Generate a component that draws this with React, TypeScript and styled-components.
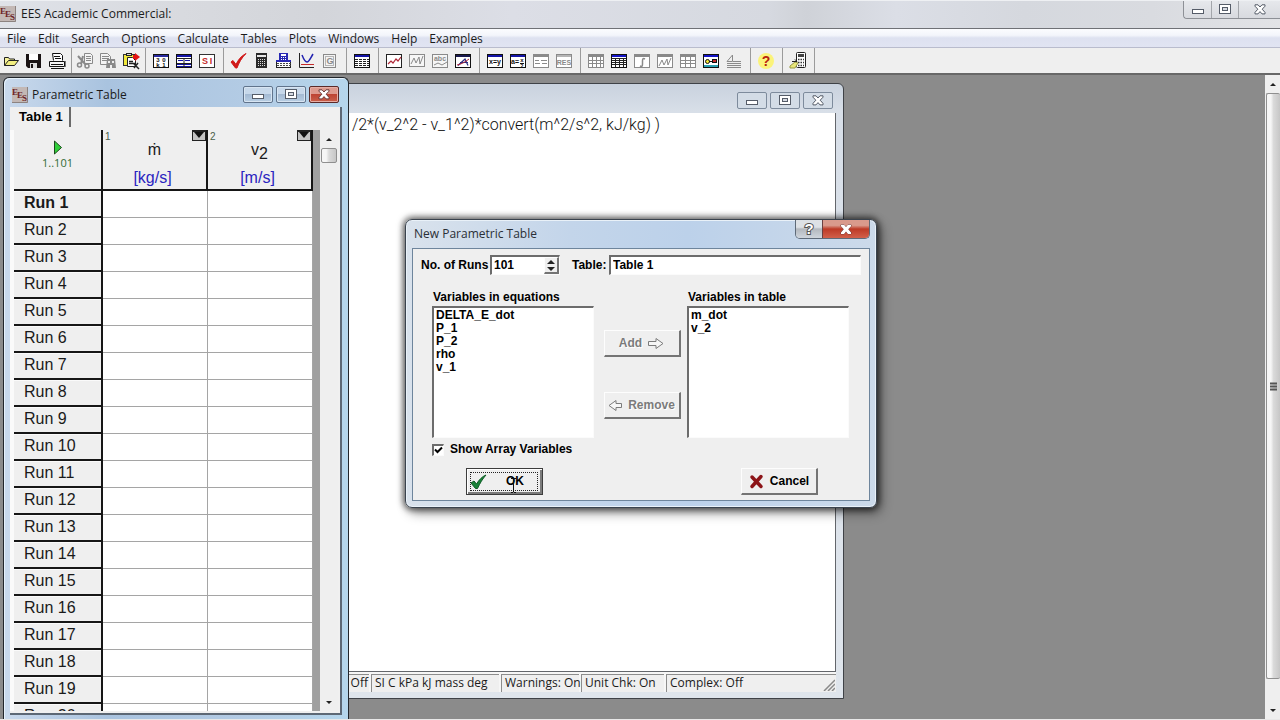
import React from "react";
import styled, { createGlobalStyle, css } from "styled-components";

const GlobalStyle = createGlobalStyle`
  *, *::before, *::after { box-sizing: border-box; }
  html, body, #root { height: 100%; }
  body { margin: 0; overflow: hidden; background: #8b8b8b; }
  button, input, select { font: inherit; color: inherit; margin: 0; }
`;

const uiFont = `"Open Sans", "Noto Sans", sans-serif`;
const sansFont = `"Liberation Sans", Arial, sans-serif`;

/* ---------- application frame ---------- */

const Screen = styled.div`
  display: flex;
  flex-direction: column;
  height: 100vh;
  font: 12px/16px ${uiFont};
  color: #1b1b1b;
`;

const TitleBar = styled.header`
  display: flex;
  justify-content: space-between;
  height: 28px;
  flex: none;
  background: linear-gradient(90deg, #dfe2e8 0%, #d9dbe0 12%, #d3d5da 25%, #dcdee6 40%, #d6d9e0 60%, #cfd2d8 63%, #dbdee6 70%, #d5d8de 80%, #d9dbe0 90%, #e2e3e6 100%);
  border-top: 1px solid #eef0f3;
`;

const AppTitle = styled.h1`
  display: flex;
  align-items: center;
  gap: 5px;
  margin: 0;
  padding-bottom: 2px;
  font: 12px/16px ${uiFont};
`;

const FrameControls = styled.div`
  display: grid;
  grid-template-columns: 27px 27px 42px;
  height: 18px;
  border: 1px solid #8d9096;
  border-width: 0 0 1px 1px;
  border-bottom-left-radius: 4px;
`;

const FrameButton = styled.button`
  display: flex;
  align-items: center;
  justify-content: center;
  padding: 0;
  border: 0;
  background: linear-gradient(#e6e8ec, #d8dadf);
  & + & { border-left: 1px solid #a3a6ab; }
  &:first-child { border-bottom-left-radius: 4px; }
`;

const MenuBar = styled.nav`
  display: flex;
  flex: none;
  height: 20px;
  padding-left: 1px;
  border-top: 1px solid #6f7176;
  border-bottom: 1px solid #b9bccd;
  background: linear-gradient(#fbfcfe 0%, #f3f5fb 35%, #dde1f0 50%, #e1e4f2 100%);
`;

const MenuItem = styled.button`
  padding: 2px 6px 0;
  border: 0;
  background: none;
  font: 12px/16px ${uiFont};
`;

const ToolBar = styled.div`
  display: flex;
  flex: none;
  height: 27px;
  background: #efefef;
  border-bottom: 2px solid #686868;
`;

const ToolGroup = styled.div<{ $left: number; $right: number }>`
  display: flex;
  align-items: center;
  padding: 0 ${(p) => p.$right}px 0 ${(p) => p.$left}px;
  border-right: 1px solid #9b9b9b;
`;

const ToolButton = styled.button`
  width: 23px;
  height: 24px;
  padding: 0 0 0 1px;
  border: 0;
  background: none;
  svg { display: block; }
`;

const Workspace = styled.div`
  display: flex;
  flex: 1;
  min-height: 0;
  border-bottom: 1px solid #e8e8e8;
`;

const Desktop = styled.main`
  position: relative;
  flex: 1;
  min-width: 0;
  overflow: hidden;
  background: #8b8b8b;
`;

/* ---------- scroll bars ---------- */

const ScrollTrack = styled.div<{ $width: number }>`
  display: flex;
  flex-direction: column;
  flex: none;
  width: ${(p) => p.$width}px;
  background: #efefef;
`;

const ScrollArrow = styled.button`
  display: flex;
  align-items: center;
  justify-content: center;
  flex: none;
  height: 18px;
  padding: 0;
  border: 0;
  background: none;
`;

const ScrollThumb = styled.div<{ $fill?: boolean }>`
  display: flex;
  align-items: center;
  justify-content: center;
  flex: none;
  margin: 0 1px;
  height: 15px;
  border: 1px solid #8f8f8f;
  border-radius: 2px;
  background: linear-gradient(90deg, #f6f6f6 30%, #dadada 50%, #c6c6c6);
  ${(p) => p.$fill && css`
    flex: 1;
    margin: 0 0 22px 1px;
    border-right: 0;
  `}
`;

const ScrollSpace = styled.div`
  flex: 1;
`;

/* ---------- child windows ---------- */

const EquationsWindow = styled.section`
  position: absolute;
  left: 100px;
  top: 8px;
  width: 744px;
  height: 616px;
  display: flex;
  flex-direction: column;
  padding: 0 7px 6px;
  border: 1px solid #3f4247;
  border-radius: 6px 6px 0 0;
  background: linear-gradient(#c9d2de 0, #d8dfe8 28px, #dfe5ec 100%);
`;

const ParametricWindow = styled.section`
  position: absolute;
  left: 3px;
  top: 2px;
  bottom: 0;
  width: 346px;
  display: flex;
  flex-direction: column;
  padding: 0 6px 4px;
  border: 1px solid #22262b;
  border-bottom: 0;
  border-radius: 6px 6px 0 0;
  background: linear-gradient(90deg, #c9d9ec, #a9c3df 30%, #b3cbe4 70%, #b5d6ec);
  box-shadow: inset 1px 1px 0 #e6f1fa;
`;

const WindowTitleBar = styled.header`
  display: flex;
  align-items: center;
  gap: 3px;
  flex: none;
  height: 29px;
  padding: 4px 3px 0 2px;
`;

const WindowTitle = styled.h2`
  flex: 1;
  display: flex;
  align-items: center;
  gap: 4px;
  margin: 0;
  font: 12px/16px ${uiFont};
`;

const CaptionButton = styled.button<{ $tone?: "active" | "close" }>`
  display: flex;
  align-items: center;
  justify-content: center;
  width: 30px;
  height: 17px;
  padding: 0;
  border: 1px solid #7d8b9c;
  border-radius: 2px;
  background: #d3dce6;
  ${(p) => p.$tone === "active" && css`
    border-color: #61748c;
    background: linear-gradient(#c7d8ea 45%, #a4bad3 50%, #b9cfe4);
    box-shadow: inset 0 0 0 1px #d8e5f2;
  `}
  ${(p) => p.$tone === "close" && css`
    border-color: #5b2a28;
    background: linear-gradient(#dd9a8e 45%, #bd4433 50%, #c9604b);
    box-shadow: inset 0 0 0 1px #e6aea5;
  `}
`;

const Editor = styled.div`
  flex: 1;
  border-right: 1px solid #63666b;
  border-bottom: 1px solid #63666b;
  background: #fff;
  overflow: hidden;
`;

const EquationLine = styled.pre`
  margin: 0;
  padding: 2px 175px 0 0;
  text-align: right;
  font: 300 16px/20px Roboto, ${sansFont};
  color: #111;
`;

const StatusBar = styled.footer`
  display: grid;
  grid-template-columns: 261px 128px 78px 83px 1fr;
  gap: 2px;
  height: 20px;
  padding-top: 2px;
  background: #f6f6f6;
`;

const StatusCell = styled.div<{ $end?: boolean }>`
  display: flex;
  justify-content: ${(p) => (p.$end ? "flex-end" : "flex-start")};
  padding: 0 1px 0 3px;
  border-top: 1px solid #8c8c8c;
  border-left: 1px solid #8c8c8c;
  background: #efefef;
  font: 12px/16px ${uiFont};
  white-space: nowrap;
`;

const Grip = styled.svg`
  margin: 4px 0 0 auto;
`;

/* ---------- parametric table ---------- */

const TableClient = styled.div`
  flex: 1;
  min-height: 0;
  display: flex;
  flex-direction: column;
  border-right: 2px solid #5d6875;
  border-bottom: 2px solid #5d6875;
  background: #f0f0f0;
`;

const TabStrip = styled.div`
  flex: none;
  height: 23px;
`;

const Tab = styled.button`
  height: 20px;
  padding: 0 6px 0 9px;
  border: 0;
  border-right: 2px solid #6a6a6a;
  background: none;
  font: bold 13px/20px ${sansFont};
  color: #000;
`;

const GridRow = styled.div`
  flex: 1;
  min-height: 0;
  display: flex;
  margin: 0 2px 2px 0;
  border-left: 4px solid #fafafa;
`;

const GridClip = styled.div`
  flex: none;
  overflow: hidden;
  background: #fff;
`;

const RunTable = styled.table`
  border-collapse: separate;
  border-spacing: 0;
  table-layout: fixed;
  width: 299px;
  font: 16px/20px ${sansFont};
  color: #1a1a1a;
`;

const headerFace = css`
  padding: 0;
  border-right: 2px solid #161616;
  border-bottom: 2px solid #161616;
  background: #efefef;
  font-weight: normal;
`;

const HeadCell = styled.th<{ $width: number }>`
  ${headerFace}
  width: ${(p) => p.$width}px;
  height: 61px;
  vertical-align: top;
`;

const RunAllButton = styled.button`
  display: flex;
  flex-direction: column;
  align-items: center;
  gap: 2px;
  width: 100%;
  padding: 10px 0 0;
  border: 0;
  background: none;
  font: 11px/12px ${uiFont};
  color: #2f6b35;
`;

const ColumnTop = styled.div`
  display: flex;
  justify-content: space-between;
  height: 11px;
  padding-left: 2px;
  font: 10px/14px ${sansFont};
  color: #4b5f4b;
`;

const ColumnMenu = styled.button`
  width: 14px;
  height: 11px;
  padding: 0;
  border: 1px solid #222;
  border-top-width: 2px;
  background: #c4c4c4;
  svg { display: block; }
`;

const ColumnName = styled.div`
  height: 27px;
  text-align: center;
  line-height: 18px;
  sub { font-size: 16px; line-height: 0; vertical-align: -4px; }
`;

const ColumnUnit = styled.div`
  text-align: center;
  padding-right: 4px;
  color: #2a24c0;
`;

const RunCell = styled.th<{ $current: boolean }>`
  ${headerFace}
  height: 27px;
  padding: 0 0 2px 10px;
  text-align: left;
  font-weight: ${(p) => (p.$current ? "bold" : "normal")};
  box-shadow: inset 0 1px 0 #fafafa;
`;

const ValueCell = styled.td`
  height: 27px;
  padding: 0;
  border-right: 1px solid #a5a5a5;
  border-bottom: 1px solid #a5a5a5;
  background: #fff;
`;

const GridGap = styled.div`
  flex: 1;
  background: #a0a0a0;
`;

/* ---------- dialog ---------- */

const Dialog = styled.section`
  position: absolute;
  left: 405px;
  top: 144px;
  width: 472px;
  height: 289px;
  display: flex;
  flex-direction: column;
  padding: 0 6px 6px;
  border: 1px solid #3a434e;
  border-radius: 7px;
  background: linear-gradient(90deg, #d9e2ec, #c3d5ea 35%, #bcd1ea 60%, #ccdaea);
  box-shadow: inset 0 0 0 1px #e9f1f8, 0 0 6px 2px rgba(0, 0, 0, 0.6), 4px 5px 12px rgba(0, 0, 0, 0.4);
  color: #000;
  font: bold 12px/13px ${sansFont};
`;

const DialogBar = styled.header`
  display: flex;
  justify-content: space-between;
  flex: none;
  height: 28px;
`;

const DialogTitle = styled.h2`
  margin: 0;
  padding: 6px 0 0 2px;
  font: 12px/16px ${uiFont};
  color: #2a2f36;
`;

const DialogControls = styled.div`
  display: grid;
  grid-template-columns: 26px 47px;
  height: 19px;
  border: 1px solid #5e6a78;
  border-top: 0;
  border-radius: 0 0 5px 5px;
  overflow: hidden;
`;

const DialogControl = styled.button<{ $close?: boolean }>`
  display: flex;
  align-items: center;
  justify-content: center;
  padding: 0;
  border: 0;
  background: linear-gradient(#dde1e5 40%, #b3b8be 50%, #cfd5dc);
  font: bold 15px/18px ${sansFont};
  color: #fff;
  -webkit-text-stroke: 2px #555;
  paint-order: stroke fill;
  ${(p) => p.$close && css`
    border-left: 1px solid #6b4040;
    background: linear-gradient(#d99a8c 30%, #bd3a26 50%, #d2604a);
  `}
`;

const DialogBody = styled.form`
  flex: 1;
  display: flex;
  flex-direction: column;
  padding: 6px 8px 5px;
  border: 1px solid #6e859c;
  background: #efefef;
`;

const TopRow = styled.div`
  display: flex;
  align-items: center;
`;

const sunken = css`
  border: 1px solid #fbfbfb;
  border-top: 2px solid #6c6c6c;
  border-left: 2px solid #6c6c6c;
  background: #fff;
`;

const raised = css`
  border: 1px solid #fdfdfd;
  border-right: 2px solid #747474;
  border-bottom: 2px solid #747474;
  background: #efefef;
`;

const RunsLabel = styled.label`
  width: 69px;
  white-space: nowrap;
`;

const SpinBox = styled.div`
  ${sunken}
  display: flex;
  width: 70px;
  height: 20px;
  margin-right: 12px;
`;

const SpinInput = styled.input`
  flex: 1;
  min-width: 0;
  padding: 0 0 1px 2px;
  border: 0;
  outline: 0;
  background: none;
`;

const SpinArrows = styled.div`
  ${raised}
  display: grid;
  grid-template-rows: 1fr 1fr;
  width: 15px;
`;

const SpinButton = styled.button`
  display: flex;
  align-items: center;
  justify-content: center;
  padding: 0;
  border: 0;
  background: none;
`;

const TableLabel = styled.label`
  width: 37px;
`;

const NameInput = styled.input`
  ${sunken}
  flex: 1;
  min-width: 0;
  height: 20px;
  padding: 0 2px 1px;
  outline: 0;
`;

const Columns = styled.div`
  display: flex;
  justify-content: space-between;
  padding: 16px 12px 0 11px;
`;

const ListField = styled.div`
  display: flex;
  flex-direction: column;
  gap: 2px;
  flex: none;
  width: 162px;
  label { padding-left: 1px; }
`;

const ListBox = styled.select`
  ${sunken}
  height: 132px;
  padding: 0;
  outline: 0;
  border-radius: 0;
  overflow: hidden;
  option {
    height: 13px;
    min-height: 13px;
    padding: 0 2px;
    font: bold 12px/13px ${sansFont};
    color: #000;
  }
`;

const TransferColumn = styled.div`
  display: flex;
  flex-direction: column;
  align-items: flex-start;
  gap: 35px;
  padding: 39px 0 0 3px;
`;

const PushButton = styled.button<{ $default?: boolean }>`
  ${raised}
  display: flex;
  align-items: center;
  justify-content: center;
  gap: 6px;
  flex: none;
  width: 77px;
  height: 27px;
  padding: 0;
  &:disabled { color: #7b7b7b; text-shadow: 1px 1px 0 #fff; }
  ${(p) => p.$default && css`
    position: relative;
    justify-content: flex-start;
    gap: 19px;
    padding-left: 3px;
    border: 1px solid #3d3d3d;
    box-shadow: inset 1px 1px 0 #fff, inset -2px -2px 0 #7b7b7b;
    &::after {
      content: "";
      position: absolute;
      inset: 3px 4px 3px 3px;
      border: 1px dotted #222;
    }
  `}
`;

const CheckLabel = styled.label`
  display: flex;
  align-items: center;
  gap: 6px;
  padding: 5px 11px 0;
`;

const CheckBox = styled.input`
  appearance: none;
  ${sunken}
  width: 12px;
  height: 12px;
  &:checked {
    background: #fff url("data:image/svg+xml,%3Csvg xmlns='http://www.w3.org/2000/svg' viewBox='0 0 9 9'%3E%3Cpath d='M1 3.5 3.5 6 8 1.5' fill='none' stroke='black' stroke-width='2'/%3E%3C/svg%3E") center / 9px 9px no-repeat;
  }
`;

const Actions = styled.div`
  display: flex;
  justify-content: space-between;
  padding: 12px 43px 0 45px;
`;

const MousePointer = styled.svg`
  position: absolute;
  left: 510px;
  top: 403px;
`;

/* ---------- drawings ---------- */

const Logo = () => (
  <svg width="16" height="16" viewBox="0 0 16 16" aria-hidden="true">
    <rect width="16" height="16" fill="#c3b8b5" />
    <path d="M0 15.5h15.5V0" fill="none" stroke="#8d8380" />
    <g fontFamily="Liberation Serif, serif" fontWeight="bold" fontSize="9" fill="#6d2426">
      <text x="0" y="8">E</text>
      <text x="5" y="11">E</text>
      <text x="10" y="14">S</text>
    </g>
  </svg>
);

const MinimizeGlyph = () => (
  <svg width="12" height="11" viewBox="0 0 12 11" aria-hidden="true">
    <rect x="0.5" y="5.5" width="11" height="4" fill="#fff" stroke="#555c68" />
  </svg>
);

const MaximizeGlyph = () => (
  <svg width="12" height="11" viewBox="0 0 12 11" aria-hidden="true">
    <rect x="0.5" y="0.5" width="11" height="9" fill="#fff" stroke="#555c68" />
    <rect x="3.5" y="3.5" width="5" height="3" fill="#d6dae2" stroke="#555c68" />
  </svg>
);

const CloseGlyph = ({ edge = "#555c68" }: { edge?: string }) => (
  <svg width="12" height="11" viewBox="0 0 12 11" aria-hidden="true">
    <path d="M1 .8h3l2 2.2 2-2.2h3v1.4L8.2 5.2 11 8.4v1.5H8L6 7.6 4 9.9H1V8.400L3.800 5.200 1 2.200z" fill="#fff" stroke={edge} />
  </svg>
);

const Arrow = ({ up, size = 8 }: { up?: boolean; size?: number }) => (
  <svg width={size} height={size / 2} viewBox="0 0 8 4" aria-hidden="true">
    <path d={up ? "M4 0l4 4H0z" : "M0 0h8L4 4z"} fill="#222" />
  </svg>
);

const Sheet = ({ bar = "#1414a8", line = "#111", children }: { bar?: string; line?: string; children?: React.ReactNode }) => (
  <>
    <rect x="2.5" y="3.5" width="15" height="13" fill="#fff" stroke={line} />
    <rect x="3" y="4" width="14" height="2" fill={bar} />
    {children}
  </>
);

const Glyph = ({ x = 10, y = 14, size = 8, fill = "#111", children }: { x?: number; y?: number; size?: number; fill?: string; children: string }) => (
  <text x={x} y={y} fontFamily="Liberation Sans, sans-serif" fontWeight="bold" fontSize={size} fill={fill} textAnchor="middle">{children}</text>
);

const grey = "#8a8a8a";

const toolIcons: Record<string, React.ReactNode> = {
  Open: (
    <>
      <path d="M3.500 14.500V6.500h4l1 1.500h5v2.500" fill="#f7f39a" stroke="#222" />
      <path d="M3.500 14.500l4-5h10l-4 5z" fill="#f2ee80" stroke="#222" />
    </>
  ),
  Save: (
    <>
      <path d="M2 3h15v14H4l-2-2z" fill="#1a1414" />
      <path d="M5 3h9v6H5z" fill="#fff" />
      <path d="M6 12h7v5H6z" fill="#ddd" />
      <path d="M7 13h2v4H7z" fill="#1a1414" />
    </>
  ),
  Print: (
    <>
      <path d="M6.500 9.500l-1-7h8l2 2v5" fill="#fff" stroke="#111" />
      <path d="M7 5.500h6M8 7.500h6" stroke="#111" />
      <path d="M2.500 10.500h15v5h-15z" fill="#f4f4f4" stroke="#111" />
      <path d="M4 13.500h12M4 17.500h13" stroke="#111" />
      <path d="M18.500 10v6" stroke="#777" />
    </>
  ),
  Cut: (
    <>
      <path d="M9.500 2.500h6l2 2v8h-8z" fill="#f4f4f4" stroke={grey} />
      <path d="M11 5.500h5M11 7.500h5M11 9.500h5" stroke={grey} />
      <path d="M3 5l8 9M8 5l-2 8" stroke={grey} strokeWidth="2" fill="none" />
      <circle cx="4.500" cy="14" r="2" fill="none" stroke={grey} strokeWidth="1.500" />
      <circle cx="12" cy="15" r="2" fill="none" stroke={grey} strokeWidth="1.500" />
    </>
  ),
  Copy: (
    <>
      <path d="M2.500 2.500h7l3 3v8h-10z" fill="#f4f4f4" stroke={grey} />
      <path d="M4 5.500h7M4 7.500h7M4 9.500h6" stroke={grey} />
      <path d="M9 8h8l1 9h-4v-3h-2v3H8z" fill={grey} />
      <path d="M10 10h2v2h-2zM14 10h2v2h-2z" fill="#eee" />
    </>
  ),
  Paste: (
    <>
      <rect x="2.500" y="3.500" width="12" height="11" fill="#f0e83c" stroke="#333" />
      <rect x="5.500" y="2.500" width="5" height="2" fill="#ddd" stroke="#222" />
      <path d="M6.500 6.500h5l3 3v6h-8z" fill="#fff" stroke="#222" />
      <path d="M12 4h2v-2l5 4-5 4V8h-2z" fill="#e21414" />
      <path d="M8 10.500h4M8 12.500h6M13 13l5 5M17 12l-4 5" stroke="#222" strokeWidth="1.500" />
    </>
  ),
  "Variable Info": (
    <Sheet bar="#2a2aa0">
      <Glyph x={7} y={11} size={6}>3</Glyph>
      <Glyph x={13} y={11} size={6}>0</Glyph>
      <Glyph x={7} y={16} size={6}>k</Glyph>
      <Glyph x={13} y={16} size={6}>1</Glyph>
    </Sheet>
  ),
  "Function Info": (
    <Sheet bar="#1414a8">
      <path d="M3 7.500h14M3 12.500h14" stroke="#222" />
      <path d="M4 9.500h5M11 9.500h5" stroke="#1414a8" />
      <path d="M3 13.500h14M3 15.500h14" stroke="#1414a8" />
      <path d="M10 7v10" stroke="#222" />
    </Sheet>
  ),
  "Unit System": (
    <>
      <rect x="2.500" y="3.500" width="15" height="13" fill="#fff" stroke="#333" />
      <Glyph x={8} y={13} size={9} fill="#c52a2a">S</Glyph>
      <Glyph x={14} y={13} size={9} fill="#c52a2a">I</Glyph>
    </>
  ),
  Check: <path d="M3 11l2-1.500 3 4C10 9 13 5 18 2.500 13.500 7 11 11.500 9 17H7.500z" fill="#d01818" stroke="#d01818" />,
  Solve: (
    <>
      <rect x="5" y="2" width="11" height="15" fill="#2a2a2a" />
      <rect x="6" y="4" width="9" height="2" fill="#e8e8e8" />
      <path d="M7 8.500h8M7 10.500h8M7 12.500h8M7 14.500h8" stroke="#ddd" strokeDasharray="1 1" />
    </>
  ),
  "Solve Table": (
    <>
      <rect x="5" y="2" width="9" height="8" fill="#2929b4" />
      <rect x="7" y="3" width="5" height="2" fill="#fff" />
      <path d="M7 6.500h5M7 8.500h5" stroke="#fff" strokeDasharray="1 1" />
      <rect x="2.500" y="10.500" width="14" height="6" fill="#fff" stroke="#222" />
      <path d="M3 12.500h14M3 14.500h14" stroke="#444" strokeDasharray="2 1" />
      <path d="M2 10h15" stroke="#2929b4" strokeWidth="2" />
    </>
  ),
  "Min/Max": (
    <>
      <path d="M2.500 2v14.500H17" fill="none" stroke="#222" />
      <path d="M5 4c2 5 3 7 5 7s3-3 6-8" fill="none" stroke="#2222b0" strokeWidth="1.500" />
      <path d="M4 13.500h13" stroke="#c52a2a" />
    </>
  ),
  Guess: (
    <>
      <rect x="3.500" y="3.500" width="12" height="13" fill="#f4f4f4" stroke={grey} />
      <rect x="5.500" y="5.500" width="8" height="9" fill="none" stroke="#b5b5b5" />
      <Glyph x={10} y={13} size={9} fill={grey}>G</Glyph>
    </>
  ),
  "New Table": (
    <Sheet bar="#1414a8">
      <path d="M3 8.500h14M3 10.500h14M3 12.500h14M3 14.500h14" stroke="#222" strokeDasharray="3 1" />
    </Sheet>
  ),
  Plot: (
    <>
      <rect x="2.500" y="3.500" width="15" height="13" fill="#fff" stroke="#222" />
      <path d="M4 13l3-3 2 2 3-4 2 2 3-4" fill="none" stroke="#b02838" strokeWidth="1.200" />
    </>
  ),
  "Overlay Plot": (
    <>
      <rect x="2.500" y="3.500" width="15" height="12" fill="#f6f6f6" stroke={grey} />
      <path d="M4 13l3-6 2 5 3-6 1 7 3-8" fill="none" stroke={grey} />
    </>
  ),
  "Modify Plot": (
    <>
      <rect x="2.500" y="3.500" width="15" height="13" fill="#f6f6f6" stroke={grey} />
      <Glyph x={10} y={10} size={7} fill={grey}>abc</Glyph>
      <path d="M4 14l4-2 4 2 5-3" fill="none" stroke={grey} />
    </>
  ),
  "Plot Window": (
    <Sheet bar="#1a1a50">
      <path d="M5 14.500L12 8l3 6.500M7 11.500h8" fill="none" stroke="#2b2b80" strokeWidth="1.200" />
      <path d="M4 14c5-1 8-3 12-6" fill="none" stroke="#b02838" />
    </Sheet>
  ),
  Equations: <Sheet><Glyph y={13} size={7}>x=y</Glyph></Sheet>,
  Formatted: (
    <Sheet>
      <Glyph x={7} y={13} size={7}>a=</Glyph>
      <Glyph x={14} y={11} size={6}>x</Glyph>
      <Glyph x={14} y={17} size={5}>2</Glyph>
      <path d="M12 12.500h4" stroke="#111" />
    </Sheet>
  ),
  Solution: <Sheet bar={grey} line={grey}><path d="M4 9.500h4M10 9.500h6M4 12.500h5M11 12.500h5" stroke={grey} /></Sheet>,
  Residuals: <Sheet bar="#b5b5b5" line={grey}><Glyph y={14} size={7} fill={grey}>RES</Glyph></Sheet>,
  Arrays: <Sheet bar={grey} line={grey}><path d="M3 9.500h14M3 12.500h14M6.500 6v10M10.500 6v10M14.500 6v10" stroke={grey} /></Sheet>,
  Parametric: <Sheet bar="#1414c8"><path d="M3 7.500h14M3 9.500h14M3 11.500h14M3 13.500h14M6.500 7v9M10.500 7v9M14.500 7v9" stroke="#222" /></Sheet>,
  Integral: <Sheet bar={grey} line={grey}><path d="M13 8c-2-1-2.500 0-2.500 2v3c0 2-.5 3-2.500 2" fill="none" stroke={grey} strokeWidth="1.500" /></Sheet>,
  "Plot List": <Sheet bar={grey} line={grey}><path d="M4 15l3-6 2 5 3-6 1 6 3-7" fill="none" stroke={grey} /></Sheet>,
  Lookup: <Sheet bar={grey} line={grey}><path d="M3 9.500h14M3 12.500h14M7.500 6v10M12.500 6v10" stroke={grey} /></Sheet>,
  Diagram: (
    <Sheet bar="#1414c8">
      <circle cx="6.500" cy="10.500" r="2" fill="#f1e732" stroke="#111" />
      <rect x="11.500" y="8.500" width="4" height="3" fill="#c52a2a" stroke="#111" />
      <path d="M3 15h14" stroke="#2aa0b0" strokeWidth="2" />
      <path d="M8 10.500h3" stroke="#111" />
    </Sheet>
  ),
  Macro: <path d="M3 10.500L8.500 4v6.500zM3 12.500h14M3 14.500h14M3 16.500h14M9 10.500h8" fill="none" stroke={grey} />,
  Help: (
    <>
      <circle cx="10" cy="10" r="8" fill="#fbf37a" />
      <Glyph x={10} y={15} size={14} fill="#b8210e">?</Glyph>
    </>
  ),
  Calculator: (
    <>
      <rect x="8.500" y="1.500" width="9" height="15" rx="1" fill="#fff" stroke="#222" />
      <rect x="10" y="3" width="6" height="3" fill="#444" />
      <path d="M10 8.500h6M10 11.500h6M10 14.500h6" stroke="#333" strokeWidth="1.500" strokeDasharray="1.500 1" />
      <path d="M2 15l5-4 3 1-3 5H2z" fill="#e8e67a" stroke="#999944" />
      <path d="M4 10.500h5l-2-2" fill="none" stroke="#222" />
    </>
  ),
};

const toolGroups: { left: number; right: number; tools: string[] }[] = [
  { left: 0, right: 2, tools: ["Open", "Save", "Print"] },
  { left: 2, right: 2, tools: ["Cut", "Copy", "Paste"] },
  { left: 4, right: 4, tools: ["Variable Info", "Function Info", "Unit System"] },
  { left: 3, right: 4, tools: ["Check", "Solve", "Solve Table", "Min/Max", "Guess"] },
  { left: 4, right: 4, tools: ["New Table"] },
  { left: 4, right: 4, tools: ["Plot", "Overlay Plot", "Modify Plot", "Plot Window"] },
  { left: 4, right: 4, tools: ["Equations", "Formatted", "Solution", "Residuals"] },
  { left: 4, right: 4, tools: ["Arrays", "Parametric", "Integral", "Plot List", "Lookup", "Diagram", "Macro"] },
  { left: 4, right: 4, tools: ["Help"] },
  { left: 4, right: 4, tools: ["Calculator"] },
];

const menus = ["File", "Edit", "Search", "Options", "Calculate", "Tables", "Plots", "Windows", "Help", "Examples"];
const runs = Array.from({ length: 20 }, (_, i) => i + 1);
const equationVariables = ["DELTA_E_dot", "P_1", "P_2", "rho", "v_1"];
const tableVariables = ["m_dot", "v_2"];

/* ---------- parts ---------- */

const WindowButtons = ({ active }: { active?: boolean }) => (
  <>
    <CaptionButton type="button" aria-label="Minimize" $tone={active ? "active" : undefined}><MinimizeGlyph /></CaptionButton>
    <CaptionButton type="button" aria-label="Maximize" $tone={active ? "active" : undefined}><MaximizeGlyph /></CaptionButton>
    <CaptionButton type="button" aria-label="Close" $tone={active ? "close" : undefined}>
      <CloseGlyph edge={active ? "#6b3a38" : undefined} />
    </CaptionButton>
  </>
);

const Column = ({ index, name, unit, width }: { index: number; name: React.ReactNode; unit: string; width: number }) => (
  <HeadCell scope="col" $width={width}>
    <ColumnTop>
      {index}
      <ColumnMenu type="button" aria-label={`Column ${index} menu`}>
        <svg width="12" height="8" viewBox="0 0 12 8" aria-hidden="true"><path d="M1 0h10L6 6z" fill="#111" /></svg>
      </ColumnMenu>
    </ColumnTop>
    <ColumnName>{name}</ColumnName>
    <ColumnUnit>{unit}</ColumnUnit>
  </HeadCell>
);

const Equations = () => (
  <EquationsWindow aria-label="Equations Window">
    <WindowTitleBar>
      <WindowTitle />
      <WindowButtons />
    </WindowTitleBar>
    <Editor>
      <EquationLine>{"1/2*(v_2^2 - v_1^2)*convert(m^2/s^2, kJ/kg) )"}</EquationLine>
    </Editor>
    <StatusBar>
      <StatusCell $end>Off</StatusCell>
      <StatusCell>SI C kPa kJ mass deg</StatusCell>
      <StatusCell>Warnings: On</StatusCell>
      <StatusCell>Unit Chk: On</StatusCell>
      <StatusCell>
        Complex: Off
        <Grip width="12" height="12" viewBox="0 0 12 12" aria-hidden="true">
          <path d="M1 12L12 1M5 12l7-7M9 12l3-3" stroke="#8a8a8a" strokeWidth="1.500" />
        </Grip>
      </StatusCell>
    </StatusBar>
  </EquationsWindow>
);

const Parametric = () => (
  <ParametricWindow aria-label="Parametric Table">
    <WindowTitleBar>
      <WindowTitle><Logo />Parametric Table</WindowTitle>
      <WindowButtons active />
    </WindowTitleBar>
    <TableClient>
      <TabStrip><Tab type="button">Table 1</Tab></TabStrip>
      <GridRow>
        <GridClip>
          <RunTable>
            <thead>
              <tr>
                <HeadCell $width={89}>
                  <RunAllButton type="button">
                    <svg width="8" height="15" viewBox="0 0 8 15" aria-hidden="true"><path d="M.5 1v13L7.500 7.500z" fill="#2fd03a" stroke="#1c4a1c" /></svg>
                    1..101
                  </RunAllButton>
                </HeadCell>
                <Column index={1} name={"\u1E41"} unit="[kg/s]" width={105} />
                <Column index={2} name={<>v<sub>2</sub></>} unit="[m/s]" width={105} />
              </tr>
            </thead>
            <tbody>
              {runs.map((run) => (
                <tr key={run}>
                  <RunCell scope="row" $current={run === 1}>Run {run}</RunCell>
                  <ValueCell />
                  <ValueCell />
                </tr>
              ))}
            </tbody>
          </RunTable>
        </GridClip>
        <GridGap />
        <ScrollTrack $width={18}>
          <ScrollArrow type="button" aria-label="Scroll up"><Arrow up size={6} /></ScrollArrow>
          <ScrollThumb />
          <ScrollSpace />
          <ScrollArrow type="button" aria-label="Scroll down"><Arrow size={6} /></ScrollArrow>
        </ScrollTrack>
      </GridRow>
    </TableClient>
  </ParametricWindow>
);

const NewTableDialog = () => (
  <Dialog role="dialog" aria-labelledby="dialog-title">
    <DialogBar>
      <DialogTitle id="dialog-title">New Parametric Table</DialogTitle>
      <DialogControls>
        <DialogControl type="button">?</DialogControl>
        <DialogControl type="button" aria-label="Close" $close><CloseGlyph edge="#6b3a38" /></DialogControl>
      </DialogControls>
    </DialogBar>
    <DialogBody onSubmit={(e) => e.preventDefault()}>
      <TopRow>
        <RunsLabel htmlFor="runs">No. of Runs</RunsLabel>
        <SpinBox>
          <SpinInput id="runs" defaultValue="101" />
          <SpinArrows>
            <SpinButton type="button" aria-label="More runs"><Arrow up /></SpinButton>
            <SpinButton type="button" aria-label="Fewer runs"><Arrow /></SpinButton>
          </SpinArrows>
        </SpinBox>
        <TableLabel htmlFor="table-name">Table:</TableLabel>
        <NameInput id="table-name" defaultValue="Table 1" />
      </TopRow>
      <Columns>
        <ListField>
          <label htmlFor="equation-variables">Variables in equations</label>
          <ListBox id="equation-variables" multiple size={9}>
            {equationVariables.map((v) => <option key={v}>{v}</option>)}
          </ListBox>
        </ListField>
        <TransferColumn>
          <PushButton type="button" disabled>
            Add
            <svg width="16" height="11" viewBox="0 0 16 11" aria-hidden="true"><path d="M.5 3.500H8v-3l7 5-7 5v-3H.5z" fill="#f6f6f6" stroke="#7b7b7b" /></svg>
          </PushButton>
          <PushButton type="button" disabled>
            <svg width="14" height="11" viewBox="0 0 14 11" aria-hidden="true"><path d="M13.500 3.500H8v-3l-7 5 7 5v-3h5.500z" fill="#f6f6f6" stroke="#7b7b7b" /></svg>
            Remove
          </PushButton>
        </TransferColumn>
        <ListField>
          <label htmlFor="table-variables">Variables in table</label>
          <ListBox id="table-variables" multiple size={9}>
            {tableVariables.map((v) => <option key={v}>{v}</option>)}
          </ListBox>
        </ListField>
      </Columns>
      <CheckLabel>
        <CheckBox type="checkbox" defaultChecked />
        Show Array Variables
      </CheckLabel>
      <Actions>
        <PushButton type="submit" $default>
          <svg width="17" height="16" viewBox="0 0 17 16" aria-hidden="true"><path d="M1 9l3-2 2.500 3C9 6 12 2.500 16 1c-3.500 4-6 8-8.500 13.500H5.500z" fill="#188238" stroke="#0f5c26" /></svg>
          OK
        </PushButton>
        <PushButton type="button">
          <svg width="15" height="15" viewBox="0 0 15 15" aria-hidden="true"><path d="M3 3l9 9.500M12 2.500L3 12.500" stroke="#8c1418" strokeWidth="3.500" strokeLinecap="round" /></svg>
          Cancel
        </PushButton>
      </Actions>
    </DialogBody>
  </Dialog>
);

export default function App() {
  return (
    <Screen>
      <GlobalStyle />
      <TitleBar>
        <AppTitle><Logo />EES Academic Commercial:</AppTitle>
        <FrameControls>
          <FrameButton type="button" aria-label="Minimize"><MinimizeGlyph /></FrameButton>
          <FrameButton type="button" aria-label="Maximize"><MaximizeGlyph /></FrameButton>
          <FrameButton type="button" aria-label="Close"><CloseGlyph /></FrameButton>
        </FrameControls>
      </TitleBar>
      <MenuBar>
        {menus.map((menu) => <MenuItem key={menu} type="button">{menu}</MenuItem>)}
      </MenuBar>
      <ToolBar role="toolbar" aria-label="Standard">
        {toolGroups.map((group) => (
          <ToolGroup key={group.tools[0]} $left={group.left} $right={group.right}>
            {group.tools.map((tool) => (
              <ToolButton key={tool} type="button" aria-label={tool}>
                <svg width="20" height="20" viewBox="0 0 20 20" aria-hidden="true">{toolIcons[tool]}</svg>
              </ToolButton>
            ))}
          </ToolGroup>
        ))}
      </ToolBar>
      <Workspace>
        <Desktop>
          <Equations />
          <Parametric />
          <NewTableDialog />
          <MousePointer width="7" height="15" viewBox="0 0 7 15" aria-hidden="true">
            <path d="M1 .5h2M4 .5h2M3.500 1v13M1 14.500h2M4 14.500h2" fill="none" stroke="#111" />
          </MousePointer>
        </Desktop>
        <ScrollTrack $width={15}>
          <ScrollArrow type="button" aria-label="Scroll up"><Arrow up size={6} /></ScrollArrow>
          <ScrollThumb $fill>
            <svg width="7" height="9" viewBox="0 0 7 9" aria-hidden="true"><path d="M0 1.500h7M0 4.500h7M0 7.500h7" stroke="#555" strokeWidth="2" /></svg>
          </ScrollThumb>
          <ScrollArrow type="button" aria-label="Scroll down"><Arrow size={6} /></ScrollArrow>
        </ScrollTrack>
      </Workspace>
    </Screen>
  );
}
